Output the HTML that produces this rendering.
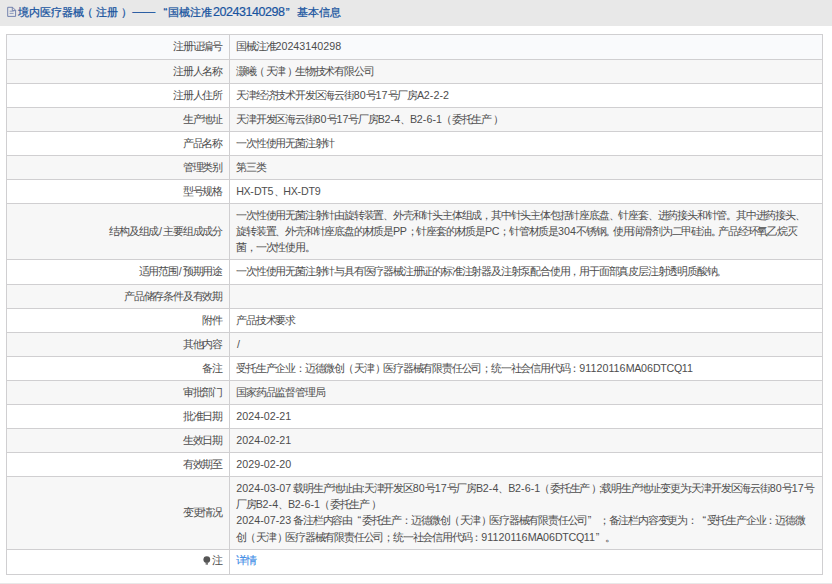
<!DOCTYPE html>
<html><head><meta charset="utf-8">
<style>
html,body{margin:0;padding:0;}
body{width:832px;height:584px;overflow:hidden;background:#fff;position:relative;font-family:"Liberation Sans",sans-serif;}
.hd{position:absolute;left:0;top:0;width:832px;height:26px;background:#e8e8e8;}
.ht{position:absolute;-webkit-text-stroke:0.25px #18549f;left:17.5px;top:1.5px;font-size:11.3px;line-height:20px;color:#18549f;white-space:nowrap;}
.bg{position:absolute;left:6px;width:817px;}
.hl{position:absolute;left:6px;width:817px;height:1px;background:#d0cfd1;}
.vl{position:absolute;width:1px;background:#d0cfd1;}
.t{position:absolute;letter-spacing:-1.2px;font-size:10.7px;line-height:16.2px;color:#4d4d4d;white-space:nowrap;}
.l{text-align:right;}
.sl{letter-spacing:1.2px;padding-left:0.8px}
.op{position:relative;left:-1.4px}
.cp{position:relative;left:2px}
.p{letter-spacing:-0.9px}
.lq{display:inline-block;width:9.8px;text-align:right;letter-spacing:0;padding-right:0.6px;box-sizing:border-box}
.rq{display:inline-block;width:9.8px;text-align:left;letter-spacing:0;padding-left:0.6px;box-sizing:border-box}
.d{letter-spacing:0.05px}
.a{letter-spacing:-0.35px}
.ft{position:absolute;left:0;top:583px;width:832px;height:1px;background:#e8e8e8;}
</style></head><body>
<div class="hd"></div>
<svg style="position:absolute;left:0;top:0" width="20" height="26" viewBox="0 0 20 26"><path d="M7.7 7.3H12.6L15.6 10.3V16.4H7.7Z" fill="none" stroke="#6878a8" stroke-width="0.9"/><path d="M12.3 7.3V10.6H15.6" fill="none" stroke="#6878a8" stroke-width="0.9"/><path d="M9.6 11.2H13.6M9.6 13.4H13.6" stroke="#8190b8" stroke-width="0.9"/></svg>
<div class="ht" style="left:18.0px">境内医疗器械</div>
<div class="ht" style="left:81.5px">（</div>
<div class="ht" style="left:96.2px">注册</div>
<div class="ht" style="left:121.2px">）</div>
<div class="ht" style="left:132.5px;top:0.7px;-webkit-text-stroke:0.45px #18549f">——</div>
<div class="ht" style="left:163.5px">“</div>
<div class="ht" style="left:167.5px">国械注准</div>
<div class="ht" style="left:213px;letter-spacing:-0.45px;font-size:12.5px;top:1.5px;-webkit-text-stroke:0.2px #18549f">20243140298</div>
<div class="ht" style="left:285.8px">”</div>
<div class="ht" style="left:297.0px">基本信息</div>

<div class="bg" style="top:35px;height:24px;background:#f9fafc"></div>
<div class="bg" style="top:60px;height:23px;background:#f7f7f7"></div>
<div class="bg" style="top:84px;height:23px;background:#ffffff"></div>
<div class="bg" style="top:108px;height:23px;background:#f7f7f7"></div>
<div class="bg" style="top:132px;height:23px;background:#ffffff"></div>
<div class="bg" style="top:156px;height:23px;background:#f7f7f7"></div>
<div class="bg" style="top:180px;height:23px;background:#ffffff"></div>
<div class="bg" style="top:204px;height:55px;background:#f7f7f7"></div>
<div class="bg" style="top:260px;height:24px;background:#ffffff"></div>
<div class="bg" style="top:285px;height:23px;background:#f7f7f7"></div>
<div class="bg" style="top:309px;height:23px;background:#ffffff"></div>
<div class="bg" style="top:333px;height:23px;background:#f7f7f7"></div>
<div class="bg" style="top:357px;height:23px;background:#ffffff"></div>
<div class="bg" style="top:381px;height:23px;background:#f7f7f7"></div>
<div class="bg" style="top:405px;height:23px;background:#ffffff"></div>
<div class="bg" style="top:429px;height:23px;background:#f7f7f7"></div>
<div class="bg" style="top:453px;height:23px;background:#ffffff"></div>
<div class="bg" style="top:477px;height:72px;background:#f7f7f7"></div>
<div class="bg" style="top:550px;height:24px;background:#ffffff"></div>
<div class="hl" style="top:34px"></div>
<div class="hl" style="top:59px"></div>
<div class="hl" style="top:83px"></div>
<div class="hl" style="top:107px"></div>
<div class="hl" style="top:131px"></div>
<div class="hl" style="top:155px"></div>
<div class="hl" style="top:179px"></div>
<div class="hl" style="top:203px"></div>
<div class="hl" style="top:259px"></div>
<div class="hl" style="top:284px"></div>
<div class="hl" style="top:308px"></div>
<div class="hl" style="top:332px"></div>
<div class="hl" style="top:356px"></div>
<div class="hl" style="top:380px"></div>
<div class="hl" style="top:404px"></div>
<div class="hl" style="top:428px"></div>
<div class="hl" style="top:452px"></div>
<div class="hl" style="top:476px"></div>
<div class="hl" style="top:549px"></div>
<div class="hl" style="top:574px"></div>
<div class="vl" style="left:6px;top:34px;height:541px"></div>
<div class="vl" style="left:822px;top:34px;height:541px"></div>
<div class="vl" style="left:229px;top:34px;height:541px"></div>
<div class="t l" style="right:610px;top:38.20px">注册证编号</div>
<div class="t" style="left:236.2px;top:38.20px">国械注准<span class="d">20243140298</span></div>
<div class="t l" style="right:610px;top:62.70px">注册人名称</div>
<div class="t" style="left:236.2px;top:62.70px">灏曦<span class="op">（</span>天津<span class="cp">）</span>生物技术有限公司</div>
<div class="t l" style="right:610px;top:86.70px">注册人住所</div>
<div class="t" style="left:236.2px;top:86.70px">天津经济技术开发区海云街<span class="d">80</span>号<span class="d">17</span>号厂房<span class="a">A</span><span class="d">2-2-2</span></div>
<div class="t l" style="right:610px;top:110.70px">生产地址</div>
<div class="t" style="left:236.2px;top:110.70px">天津开发区海云街<span class="d">80</span>号<span class="d">17</span>号厂房<span class="a">B</span><span class="d">2-4</span>、<span class="a">B</span><span class="d">2-6-1</span><span class="op">（</span>委托生产<span class="cp">）</span></div>
<div class="t l" style="right:610px;top:134.70px">产品名称</div>
<div class="t" style="left:236.2px;top:134.70px">一次性使用无菌注射针</div>
<div class="t l" style="right:610px;top:158.70px">管理类别</div>
<div class="t" style="left:236.2px;top:158.70px">第三类</div>
<div class="t l" style="right:610px;top:182.70px">型号规格</div>
<div class="t" style="left:236.2px;top:182.70px"><span class="a">HX</span><span class="d">-</span><span class="a">DT</span><span class="d">5</span>、<span class="a">HX</span><span class="d">-</span><span class="a">DT</span><span class="d">9</span></div>
<div class="t l" style="right:610px;top:222.70px">结构及组成<span class="sl">/</span>主要组成成分</div>
<div class="t" style="left:236.2px;top:206.50px">一次性使用无菌注射针由旋转装置、外壳和针头主体组成，其中针头主体包括针座底盘、针座套、进药接头和针管。其中进药接头、<br>旋转装置、外壳和针座底盘的材质是<span class="a">PP</span>；针座套的材质是<span class="a">PC</span>；针管材质是<span class="d">304</span>不锈钢<span style="letter-spacing:-3.6px">。</span>使用润滑剂为二甲硅油<span style="letter-spacing:-3.6px">。</span>产品经环氧乙烷灭<br>菌，一次性使用。</div>
<div class="t l" style="right:610px;top:263.20px">适用范围<span class="sl">/</span>预期用途</div>
<div class="t" style="left:236.2px;top:263.20px">一次性使用无菌注射针与具有医疗器械注册证的标准注射器及注射泵配合使用，用于面部真皮层注射透明质酸钠。</div>
<div class="t l" style="right:610px;top:287.70px">产品储存条件及有效期</div>
<div class="t" style="left:236.2px;top:287.70px"></div>
<div class="t l" style="right:610px;top:311.70px">附件</div>
<div class="t" style="left:236.2px;top:311.70px">产品技术要求</div>
<div class="t l" style="right:610px;top:335.70px">其他内容</div>
<div class="t" style="left:236.2px;top:335.70px"><span class="sl">/</span></div>
<div class="t l" style="right:610px;top:359.70px">备注</div>
<div class="t" style="left:236.2px;top:359.70px">受托生产企业：迈德微创<span class="op">（</span>天津<span class="cp">）</span>医疗器械有限责任公司；统一社会信用代码：<span class="d">91120116</span><span class="a">MA</span><span class="d">06</span><span class="a">DTCQ</span><span class="d">11</span></div>
<div class="t l" style="right:610px;top:383.70px">审批部门</div>
<div class="t" style="left:236.2px;top:383.70px">国家药品监督管理局</div>
<div class="t l" style="right:610px;top:407.70px">批准日期</div>
<div class="t" style="left:236.2px;top:407.70px"><span class="d">2024-02-21</span></div>
<div class="t l" style="right:610px;top:431.70px">生效日期</div>
<div class="t" style="left:236.2px;top:431.70px"><span class="d">2024-02-21</span></div>
<div class="t l" style="right:610px;top:455.70px">有效期至</div>
<div class="t" style="left:236.2px;top:455.70px"><span class="d">2029-02-20</span></div>
<div class="t l" style="right:610px;top:504.20px">变更情况</div>
<div class="t" style="left:236.2px;top:479.90px"><span class="d">2024-03-07</span> 载明生产地址由<span class="p">:</span>天津开发区<span class="d">80</span>号<span class="d">17</span>号厂房<span class="a">B</span><span class="d">2-4</span>、<span class="a">B</span><span class="d">2-6-1</span><span class="op">（</span>委托生产<span class="cp">）</span><span class="p">;</span>载明生产地址变更为<span class="p">:</span>天津开发区海云街<span class="d">80</span>号<span class="d">17</span>号<br>厂房<span class="a">B</span><span class="d">2-4</span>、<span class="a">B</span><span class="d">2-6-1</span><span class="op">（</span>委托生产<span class="cp">）</span><br><span class="d">2024-07-23</span> 备注栏内容由<span class="lq">“</span>委托生产：迈德微创<span class="op">（</span>天津<span class="cp">）</span>医疗器械有限责任公司<span class="rq">”</span> ；备注栏内容变更为：<span class="lq">“</span>受托生产企业：迈德微<br>创<span class="op">（</span>天津<span class="cp">）</span>医疗器械有限责任公司；统一社会信用代码：<span class="d">91120116</span><span class="a">MA</span><span class="d">06</span><span class="a">DTCQ</span><span class="d">11</span><span class="rq">”</span>。</div>
<svg style="position:absolute;left:203px;top:556px" width="8" height="10" viewBox="0 0 8 10"><circle cx="3.8" cy="3.6" r="3.4" fill="#555"/><rect x="2.6" y="6.5" width="2.4" height="2.2" fill="#777"/></svg>
<div class="t l" style="right:610.7px;top:552.20px">注</div>
<div class="t" style="left:236.2px;top:552.20px;color:#3b8be6;-webkit-text-stroke:0.1px #3b8be6">详情</div>
<div class="ft"></div>
</body></html>
